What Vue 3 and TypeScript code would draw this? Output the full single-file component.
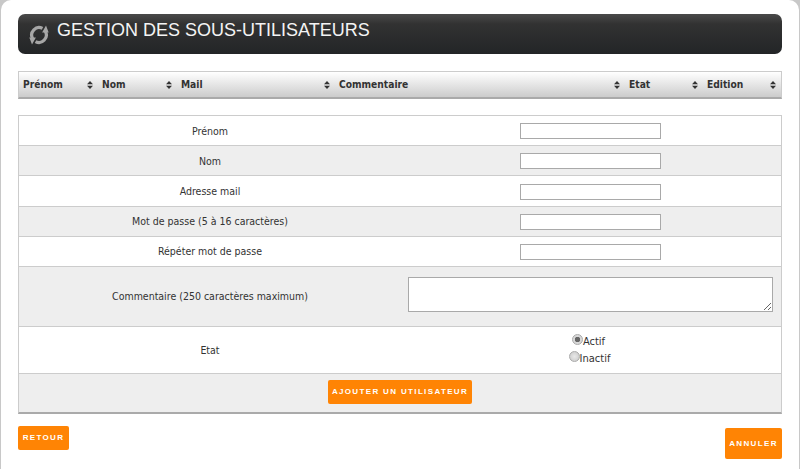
<script setup lang="ts">
const heads = [
  { label: 'Prénom', w: 79 },
  { label: 'Nom', w: 79 },
  { label: 'Mail', w: 158 },
  { label: 'Commentaire', w: 290 },
  { label: 'Etat', w: 78 },
  { label: 'Edition', w: 78 },
]
const rows = [
  { label: 'Prénom', alt: false },
  { label: 'Nom', alt: true },
  { label: 'Adresse mail', alt: false },
  { label: 'Mot de passe (5 à 16 caractères)', alt: true },
  { label: 'Répéter mot de passe', alt: false },
]
</script>

<template>
  <div class="page">
    <div class="sheet">
      <h1 class="title">
        <svg class="sync" viewBox="0 0 20 22" width="20" height="22" aria-hidden="true">
          <g fill="none" stroke="#a6a6a6" stroke-width="3.2">
            <path d="M13.5 4.4A7.4 7.4 0 0 0 3.6 14.5" />
            <path d="M6.5 17.6A7.4 7.4 0 0 0 16.4 7.5" />
          </g>
          <path d="M.3 13.6h6.6L3 20.4zM19.7 8.4h-6.6L17 1.6z" fill="#a6a6a6" />
        </svg>
        <span>GESTION DES SOUS-UTILISATEURS</span>
      </h1>

      <div class="thead">
        <div v-for="h in heads" :key="h.label" class="th" :style="{ width: h.w + 'px' }">
          <span>{{ h.label }}</span>
          <svg class="sort" viewBox="0 0 6 8" width="6" height="8" aria-hidden="true">
            <path d="M3 0 6 3.2H0zM3 8 0 4.8h6z" fill="#333" />
          </svg>
        </div>
      </div>

      <form class="form" @submit.prevent>
        <div v-for="r in rows" :key="r.label" class="row" :class="{ alt: r.alt }">
          <label class="lbl">{{ r.label }}</label>
          <div class="val"><input class="inp" type="text" /></div>
        </div>
        <div class="row alt tall">
          <label class="lbl">Commentaire (250 caractères maximum)</label>
          <div class="val"><textarea class="area"></textarea></div>
        </div>
        <div class="row state">
          <label class="lbl">Etat</label>
          <div class="val radios">
            <label class="radio r1"><input type="radio" name="etat" checked />Actif</label>
            <label class="radio"><input type="radio" name="etat" />Inactif</label>
          </div>
        </div>
        <div class="row alt submit">
          <button class="btn add" type="button">AJOUTER UN UTILISATEUR</button>
        </div>
      </form>

      <div class="actions">
        <button class="btn back" type="button">RETOUR</button>
        <button class="btn cancel" type="button">ANNULER</button>
      </div>
    </div>
  </div>
</template>

<style>
html, body { margin: 0; padding: 0; background: #ccc; }
</style>

<style scoped>
.page {
  width: 800px;
  height: 469px;
  overflow: hidden;
  font-family: "DejaVu Sans Condensed", "DejaVu Sans", Verdana, sans-serif;
  background: #c8c8c8;
}
.sheet {
  box-sizing: border-box;
  height: 469px;
  margin: 0 1px;
  padding: 14px 17px 0;
  background: #fff;
  border-radius: 10px 10px 0 0;
}
.title {
  display: flex;
  align-items: center;
  box-sizing: border-box;
  height: 40px;
  margin: 0;
  padding: 0 0 0 11px;
  gap: 8px;
  border-radius: 7px;
  background: linear-gradient(#4a4a4a, #323232 25%, #232527);
  color: #f4f4f4;
  font: 400 18px "Liberation Sans", Arial, sans-serif;
}
.title span { position: relative; top: -4px; }
.sync { position: relative; top: 1px; flex: none; }
.thead {
  display: flex;
  box-sizing: border-box;
  height: 28px;
  margin-top: 17px;
  border: 1px solid #ccc;
  border-bottom: 2px solid #aaa;
  background: linear-gradient(#fff, #ccc);
}
.th {
  display: flex;
  flex: none;
  align-items: center;
  justify-content: space-between;
  box-sizing: border-box;
  padding: 0 5px 0 4px;
  font-size: 10.2px;
  font-weight: 700;
  color: #333;
}
.form {
  margin-top: 16px;
  border: 1px solid #ccc;
  border-bottom: 2px solid #aaa;
}
.row {
  display: grid;
  grid-template-columns: 388px 1fr;
  align-items: center;
  box-sizing: border-box;
  height: 30.2px;
  border-bottom: 1px solid #ccc;
  font-size: 10.5px;
  color: #333;
  background: #fff;
}
.row.alt { background: #eee; }
.lbl { text-align: center; padding-right: 6px; }
.val { display: flex; justify-content: center; padding-right: 7px; }
.inp {
  box-sizing: border-box;
  width: 141px;
  height: 16px;
  margin-top: 1.2px;
  padding: 0;
  border: 1px solid #a9a9a9;
  background: #fff;
}
.tall { height: 60px; }
.area {
  box-sizing: border-box;
  width: 365px;
  height: 35px;
  margin: 0 0 4px;
  border: 1px solid #a9a9a9;
  background: #fff;
}
.state { height: 47px; }
.radios { flex-direction: column; align-items: center; padding-right: 9px; }
.radio { display: flex; align-items: center; height: 17px; font-size: 11px; }
.radio input {
  appearance: none;
  box-sizing: border-box;
  width: 11px;
  height: 11px;
  margin: 0 0 3px;
  border: 1px solid #aaa;
  border-radius: 50%;
  background: radial-gradient(circle, #e8e8e8, #c8c8c8);
}
.radio input:checked {
  background: radial-gradient(circle, #666 0 2.5px, #d8d8d8 3px);
}
.r1 { margin-right: 2px; }
.submit {
  display: flex;
  justify-content: center;
  height: 38px;
  border-bottom: 0;
}
.btn {
  height: 24px;
  padding: 0;
  border: 0;
  border-radius: 2px;
  background: #ff8404;
  color: #fff;
  font: 700 8px "Liberation Sans", Arial, sans-serif;
  letter-spacing: 1.35px;
  white-space: nowrap;
}
.add { width: 144px; margin-bottom: 2px; }
.actions {
  display: flex;
  justify-content: space-between;
  align-items: flex-start;
  margin-top: 12px;
}
.back { width: 51px; height: 24px; }
.cancel { width: 57px; height: 31px; margin-top: 2px; }
</style>
